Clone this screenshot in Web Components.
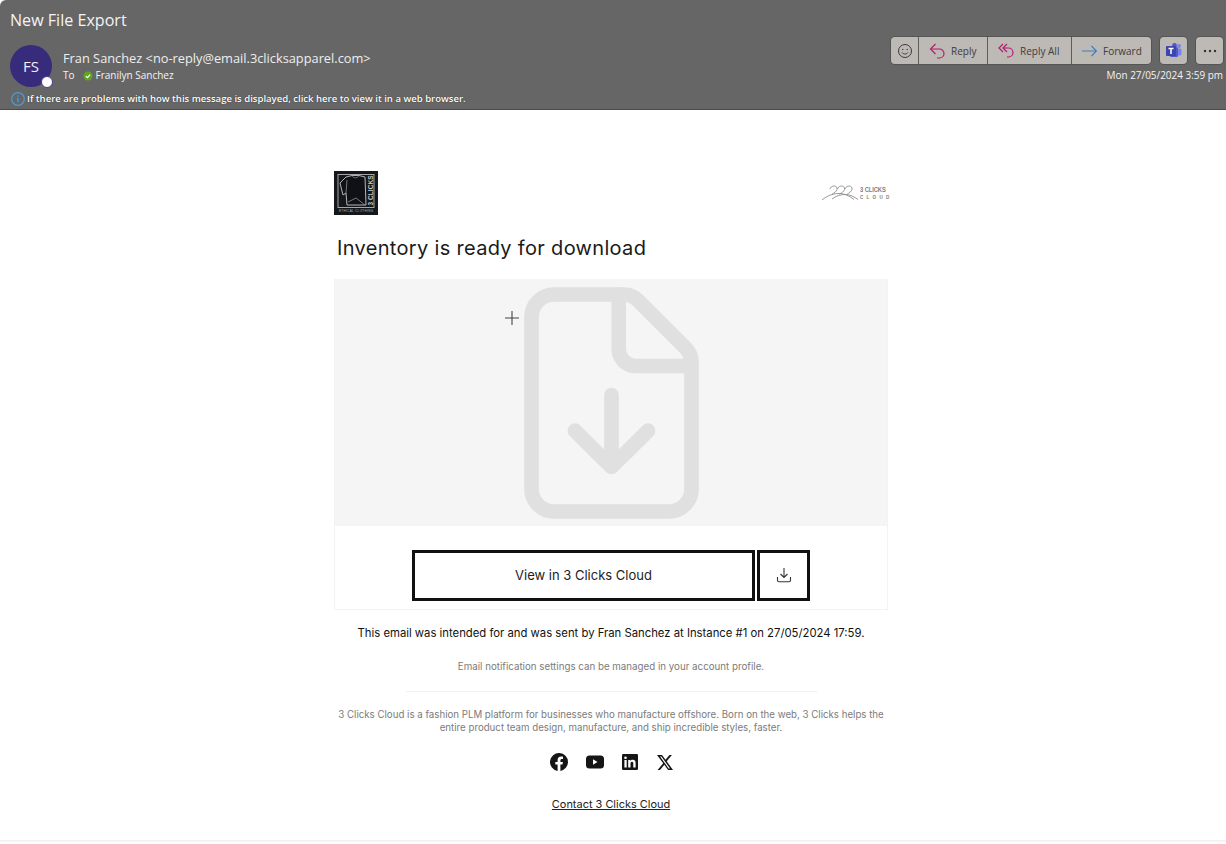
<!DOCTYPE html>
<html lang="en"><head><meta charset="utf-8"><title>New File Export</title>
<style>
html,body{margin:0;padding:0;background:#fff;height:844px;overflow:hidden}
body{font-family:"Inter","Liberation Sans",sans-serif}
</style></head><body>
<mail-header></mail-header>
<email-body></email-body>
<script>
const def=(name,html)=>{customElements.define(name,class extends HTMLElement{constructor(){super();this.attachShadow({mode:'open'}).innerHTML=html;}});};
const ui='"Open Sans","Noto Sans",sans-serif';
const REPLY='<path d="M2 6h8.500a4.500 4.500 0 0 1 4.500 4.500v0a4.500 4.500 0 0 1-4.500 4.500H8" fill="none" stroke-width="1.200"/><path d="M6.500 1 1.500 6l5 5" fill="none" stroke-width="1.200"/>';
def('tool-button',`<style>
:host{display:flex;align-items:center;gap:6px;box-sizing:border-box;height:27px;background:#bdb9b5;color:#3c3c3c;font:10px ${ui};white-space:nowrap;padding:0 10px;border-right:1px solid #5c5c5c}
:host(:last-child){border-right:0}
::slotted(svg){flex:none}
</style><slot name="icon"></slot><slot></slot>`);
def('mail-header',`<style>
:host{display:flex;justify-content:space-between;box-sizing:border-box;height:110px;background:#666;border-bottom:1px solid #4a4a4a;color:#fff;font-family:${ui};border-top-left-radius:6px}
.left{display:flex;flex-direction:column;padding:10px 0 0 10px}
.title{font-size:16.100px;line-height:20px;color:#f4f4f4}
.who{display:flex;gap:11px;margin-top:15px}
.avatar{position:relative;flex:none;width:42px;height:42px;border-radius:50%;background:#372c7c;display:grid;place-items:center;font-size:15px;color:#f0f0f0}
.dot{position:absolute;right:-1px;bottom:-1px;width:10px;height:10px;border:1px solid #4a3f8c;border-radius:50%;background:#fff}
.lines{display:flex;flex-direction:column;padding-top:4px}
.from{font-size:12.800px;line-height:18px;color:#eee}
.to{display:flex;align-items:center;font-size:10px;line-height:15px;margin-top:1px;color:#f4f4f4}
.to svg{margin:0 3px 0 8px}
.info{display:flex;align-items:center;gap:2px;margin:5px 0 0 1px;font-size:9.550px;font-weight:600;line-height:14px;color:#fff;text-shadow:0 0 1px #222}
.right{display:flex;flex-direction:column;align-items:flex-end;padding:37px 3px 0 0}
.bar{display:flex;gap:9px}
.group{display:flex;border-radius:4px;overflow:hidden;box-shadow:0 0 0 1px #555}
.date{font-size:9.950px;line-height:14px;margin-top:4px;color:#f4f4f4}
.single{width:27px;height:27px;border-radius:4px;background:#bdb9b5;box-shadow:0 0 0 1px #555;display:grid;place-items:center}
</style>
<div class="left">
<div class="title">New File Export</div>
<div class="who"><div class="avatar">FS<span class="dot"></span></div>
<div class="lines"><div class="from">Fran Sanchez &lt;no-reply@email.3clicksapparel.com&gt;</div>
<div class="to">To<svg width="10" height="10" viewBox="0 0 10 10"><circle cx="5" cy="5" r="4.500" fill="#5fa51d"/><path d="M2.800 5.100 4.400 6.600 7.200 3.600" fill="none" stroke="#fff" stroke-width="1.200"/></svg>Franilyn Sanchez</div></div></div>
<div class="info"><svg width="14" height="14" viewBox="0 0 14 14"><circle cx="7" cy="7" r="6.300" fill="none" stroke="#4a9bd4" stroke-width="1.200"/><path d="M7 6v4.200M7 3.500v1.200" stroke="#4a9bd4" stroke-width="1.400"/></svg><span>If there are problems with how this message is displayed, click here to view it in a web browser.</span></div>
</div>
<div class="right"><div class="bar"><div class="group">
<tool-button style="width:28px;padding:0;justify-content:center"><svg slot="icon" width="16" height="16" viewBox="0 0 16 16" fill="none" stroke="#3c3c3c"><circle cx="8" cy="8" r="6.500"/><circle cx="5.800" cy="6.500" r=".7" fill="#3c3c3c" stroke="none"/><circle cx="10.200" cy="6.500" r=".7" fill="#3c3c3c" stroke="none"/><path d="M5 9.500c1.500 2 4.500 2 6 0"/></svg></tool-button>
<tool-button style="width:69px"><svg slot="icon" width="16" height="16" viewBox="0 0 16 16" stroke="#b01f72">${REPLY}</svg>Reply</tool-button>
<tool-button style="width:84px"><svg slot="icon" width="16" height="16" viewBox="0 0 16 16" fill="none" stroke="#b01f72" stroke-width="1.200"><path d="M5 1 1 5l4 4M9 1 5 5l4 4M5 5h5.500a4.500 4.500 0 0 1 4.500 4.500v0A4.500 4.500 0 0 1 10.500 14H9"/></svg>Reply All</tool-button>
<tool-button style="width:79px"><svg slot="icon" width="15" height="12" viewBox="0 0 15 12" fill="none" stroke="#3f7fc1" stroke-width="1.200"><path d="M0 6h14M9.500 1l5 5-5 5"/></svg>Forward</tool-button>
</div>
<div class="single"><svg width="16" height="15" viewBox="0 0 16 15"><circle cx="13" cy="3" r="2" fill="#7b83eb"/><rect x="9" y="5.500" width="6.500" height="7" rx="1.500" fill="#7b83eb"/><circle cx="8.500" cy="2.500" r="2.400" fill="#4f5bc4"/><rect x="4" y="4" width="8" height="10" rx="1.500" fill="#5059c9"/><rect x="0" y="3" width="10" height="10" rx="1" fill="#3d44ae"/><path d="M2.500 5.500h5M5 5.500V11" stroke="#fff" stroke-width="1.500"/></svg></div>
<div class="single"><svg width="14" height="4" viewBox="0 0 14 4" fill="#333"><circle cx="2" cy="2" r="1.200"/><circle cx="7" cy="2" r="1.200"/><circle cx="12" cy="2" r="1.200"/></svg></div>
</div><div class="date">Mon 27/05/2024 3:59 pm</div></div>`);
def('brand-row',`<style>
:host{display:flex;justify-content:space-between;align-items:center;height:44px}
.cloud{display:flex;align-items:center;gap:2px;color:#808080;margin-right:-2px;margin-top:-1px}
.t{display:flex;flex-direction:column;gap:1px;font-family:"Liberation Sans",sans-serif;width:30px}
.a{font-size:8px;line-height:8px;font-weight:700;letter-spacing:-.1px;transform:scaleX(.72);transform-origin:left;white-space:nowrap}
.b{font-size:4.500px;line-height:5px;font-weight:700;letter-spacing:3.300px;white-space:nowrap}
</style>
<svg width="44" height="44" viewBox="0 0 44 44"><rect width="44" height="44" fill="#14171b"/><rect x="4" y="3.500" width="36" height="33" fill="none" stroke="#a5a5a5"/><path d="M12 6 18 4.500h7l6 1.500 1 28H13L12 22 9 24 6 12z" fill="#0e1116" stroke="#b5b5b5" stroke-width="1"/><path d="M18 4.500c1 3 6 3 7 0M13 9l-1 13M14 31l8-4 9 7" fill="none" stroke="#8f8f8f" stroke-width=".8"/><text transform="translate(38.500 34.500) rotate(-90)" font-family="Liberation Sans" font-size="6.500" font-weight="700" fill="#c8c8c8" textLength="30">3 CLICKS</text><text x="5" y="41" font-family="Liberation Sans" font-size="3" fill="#bbb" textLength="34">ETHICAL CLOTHING</text></svg>
<div class="cloud"><svg width="36" height="16" viewBox="0 0 36 16" fill="none" stroke="#8f8f8f" stroke-width=".9"><path d="M0 15C6 10 12 8.500 17 8.500s10 2 15 6M10 14c4-3 8-4.500 13-4.500 5 0 9 2 13 5M8 4c1-4 8-4 7 .5C14.500 6.500 12 8 10 9.500M15.500 4c1-4 8-4 7 .5C22 6.500 19.500 8 17.500 9M23 4c1-4 8-4 7 .5C29.500 6.500 27 8 25 9.500"/></svg><div class="t"><span class="a">3 CLICKS</span><span class="b">CLOUD</span></div></div>`);
def('hero-file',`<style>
:host{display:flex;justify-content:center;position:relative;box-sizing:border-box;height:247px;padding-top:8px;background:#f5f5f5}
.plus{position:absolute;left:170px;top:32px}
</style>
<svg width="175" height="232" viewBox="0 0 175 232" fill="none" stroke="#e0e0e0" stroke-width="14.700" stroke-linecap="round" stroke-linejoin="round"><path d="M30 7.500H100Q108 7.500 114 13.500L161 60.500Q167.500 67 167.500 75V202a22.500 22.500 0 0 1-22.500 22.500H30A22.500 22.500 0 0 1 7.500 202V30A22.500 22.500 0 0 1 30 7.500Z"/><path d="M94.700 7.500V62a17 17 0 0 0 17 17H167.500"/><path d="M87.500 108V180M51 143.700 87.500 180 124 143.700"/></svg>
<svg class="plus" width="14" height="14" viewBox="0 0 14 14" stroke="#444" stroke-width="1.100"><path d="M7 0v14M0 7h14"/></svg>`);
def('action-row',`<style>
:host{display:flex;justify-content:center;gap:2px;box-sizing:border-box;height:84px;padding:24px 0 0;font-size:13px;line-height:14px;color:#222}
.b{box-sizing:border-box;height:51px;border:3px solid #111;display:flex;align-items:center;justify-content:center;padding-bottom:1px}
.main{width:343px}.dl{width:53px}
</style>
<div class="b main"><slot></slot></div>
<div class="b dl"><svg width="16" height="16" viewBox="0 0 16 16" fill="none" stroke="#333" stroke-width="1.100"><path d="M8 1v9.500M4.500 7 8 10.500 11.500 7M1.500 10v3.300a1.500 1.500 0 0 0 1.500 1.500h10a1.500 1.500 0 0 0 1.500-1.500V10"/></svg></div>`);
def('social-row',`<style>
:host{display:flex;justify-content:center;align-items:center;gap:18px;height:20px}
svg{display:block}
svg:last-child{margin-left:1px}
</style>
<svg width="18" height="18" viewBox="0 0 18 18"><path fill="#151515" d="M18 9a9 9 0 1 0-10.400 8.900v-6.300H5.300V9h2.300V7c0-2.300 1.300-3.500 3.400-3.500 1 0 2 .2 2 .2v2.200h-1.100c-1.100 0-1.500.7-1.500 1.400V9h2.500l-.4 2.600h-2.100v6.300A9 9 0 0 0 18 9z"/></svg>
<svg width="18" height="14" viewBox="0 0 18 14"><rect y=".5" width="18" height="13" rx="3.500" fill="#151515"/><path d="M7 4.300v5.400L11.500 7z" fill="#fff"/></svg>
<svg width="16" height="16" viewBox="0 0 16 16"><rect width="16" height="16" rx="1.200" fill="#151515"/><path fill="#fff" d="M2.400 6h2.300v7.600H2.400zM3.500 2.400a1.300 1.300 0 1 1 0 2.700 1.300 1.300 0 0 1 0-2.700zM6.200 6h2.200v1c.4-.7 1.200-1.200 2.300-1.200 2.400 0 2.900 1.500 2.900 3.500v4.300h-2.300V9.800c0-.9 0-2-1.300-2s-1.500 1-1.500 2v3.800H6.200z"/></svg>
<svg width="16" height="15" viewBox="0 0 16 15"><path fill="#151515" d="M12.500 0h2.400L9.700 6.300 16 15h-4.900L7.300 9.700 3 15H.6l5.600-6.700L0 0h5l3.500 4.800zm-.9 13.500h1.400L4.400 1.400H3z"/></svg>`);
def('email-body',`<style>
:host{display:block;box-sizing:border-box;height:734px;padding:61px 0 0 334px;position:relative;text-align:center;color:#111}
.col{width:554px}
h1{margin:17px 0 0 3px;text-align:left;font-size:20px;font-weight:400;line-height:32px;color:#1a1a1a;letter-spacing:.32px}
.card{box-sizing:border-box;margin-top:15px;border:1px solid #f3f3f3;border-top:0;height:331px}
.intended{margin:16px 0 0;font-size:11.300px;line-height:14px;color:#111}
.settings{margin:20px 0 0;font-size:9.750px;line-height:14px;color:#7b7b7b}
hr{width:411px;margin:17px auto 0;border:0;border-top:1px solid #f0f0f0}
.about{margin:16px 0 0;font-size:9.700px;line-height:13px;color:#7b7b7b}
social-row{margin-top:18px}
a{display:inline-block;margin-top:25px;font-size:10.950px;line-height:14px;color:#222;text-decoration:underline}
.end{position:absolute;left:0;right:0;bottom:3px;height:1px;background:#f0f0f0;box-shadow:0 1px 2px #eee}
</style>
<div class="col">
<brand-row></brand-row>
<h1>Inventory is ready for download</h1>
<div class="card"><hero-file></hero-file><action-row>View in 3 Clicks Cloud</action-row></div>
<p class="intended">This email was intended for and was sent by Fran Sanchez at Instance #1 on 27/05/2024 17:59.</p>
<p class="settings">Email notification settings can be managed in your account profile.</p>
<hr>
<p class="about">3 Clicks Cloud is a fashion PLM platform for businesses who manufacture offshore. Born on the web, 3 Clicks helps the<br>entire product team design, manufacture, and ship incredible styles, faster.</p>
<social-row></social-row>
<a href="#">Contact 3 Clicks Cloud</a>
</div><div class="end"></div>`);
</script>
</body></html>
